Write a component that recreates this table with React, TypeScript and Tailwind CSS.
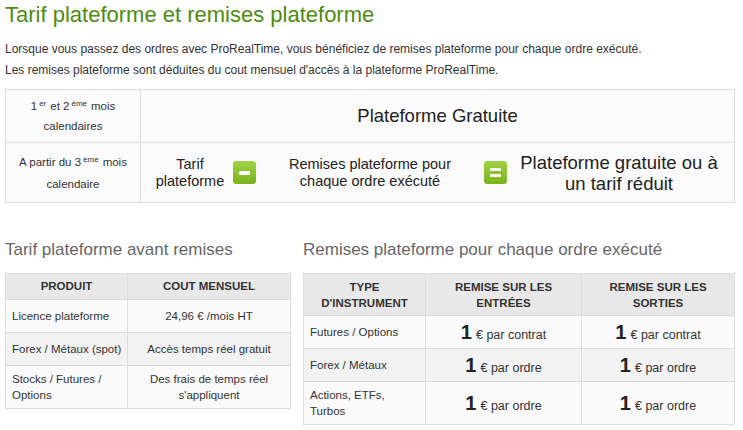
const font = { fontFamily: '"Liberation Sans", Arial, Helvetica, sans-serif' };

function GreenBox({ kind }: { kind: 'minus' | 'equal' }) {
  return (
    <div className="w-[23px] h-[23px] rounded-[3px] bg-gradient-to-b from-[#a2d245] to-[#79b21a] flex items-center justify-center shrink-0">
      {kind === 'minus' ? (
        <div className="w-[11px] h-[4px] bg-white rounded-[1px]" />
      ) : (
        <div className="flex flex-col gap-[3px]">
          <div className="w-[11px] h-[3px] bg-white rounded-[1px]" />
          <div className="w-[11px] h-[3px] bg-white rounded-[1px]" />
        </div>
      )}
    </div>
  );
}

const tarifs = [
  { produit: 'Licence plateforme', cout: '24,96 € /mois HT', h: 'h-[33px]', bg: 'bg-[#fafafa]' },
  { produit: 'Forex / Métaux (spot)', cout: 'Accès temps réel gratuit', h: 'h-[33px]', bg: 'bg-[#f2f2f2]' },
  { produit: 'Stocks / Futures / Options', cout: "Des frais de temps réel s'appliquent", h: 'h-[43px]', bg: 'bg-[#fafafa]' },
];

const remises = [
  { type: 'Futures / Options', unite: 'par contrat', h: 'h-[33px]', bg: 'bg-[#fafafa]' },
  { type: 'Forex / Métaux', unite: 'par ordre', h: 'h-[33px]', bg: 'bg-[#f2f2f2]' },
  { type: 'Actions, ETFs, Turbos', unite: 'par ordre', h: 'h-[43px]', bg: 'bg-[#fafafa]' },
];

function Montant({ unite }: { unite: string }) {
  return (
    <span>
      <span className="text-[20px] font-bold text-[#222] mr-[4px]">1</span>
      <span className="text-[12.5px]">€ {unite}</span>
    </span>
  );
}

export default function App() {
  return (
    <div className="w-[743px] h-[430px] bg-white text-[#333] overflow-hidden" style={font}>
      <div className="px-[5px]">
        <h1 className="text-[22px] leading-[24px] text-[#4e8b12] pt-[3px]">
          Tarif plateforme et remises plateforme
        </h1>

        <div className="mt-[12px] text-[12px] leading-[21px] text-[#333]">
          <p>Lorsque vous passez des ordres avec ProRealTime, vous bénéficiez de remises plateforme pour chaque ordre exécuté.</p>
          <p>Les remises plateforme sont déduites du cout mensuel d'accès à la plateforme ProRealTime.</p>
        </div>

        <table className="mt-[8px] w-[730px] border-collapse bg-[#fbfbfb]">
          <tbody>
            <tr className="h-[53px]">
              <td className="w-[135px] border border-[#dddddd] text-center text-[11.5px] leading-[20px]">
                1<sup className="text-[8px] ml-[2px] mr-[4px]">er</sup>et 2<sup className="text-[8px] ml-[2px] mr-[4px]">ème</sup>mois
                <br />
                calendaires
              </td>
              <td className="border border-[#dddddd] text-center text-[18.5px] text-[#222]">Plateforme Gratuite</td>
            </tr>
            <tr className="h-[60px]">
              <td className="border border-[#dddddd] text-center text-[11.5px] leading-[22px]">
                A partir du 3<sup className="text-[8px] ml-[2px] mr-[4px]">ème</sup>mois
                <br />
                calendaire
              </td>
              <td className="border border-[#dddddd]">
                <div className="flex items-center justify-center">
                  <div className="w-[72px] text-center text-[14.5px] leading-[17px] text-[#222]">Tarif plateforme</div>
                  <div className="ml-[7px]">
                    <GreenBox kind="minus" />
                  </div>
                  <div className="ml-[30px] w-[168px] text-center text-[14.5px] leading-[17px] text-[#222]">
                    Remises plateforme pour chaque ordre exécuté
                  </div>
                  <div className="ml-[30px]">
                    <GreenBox kind="equal" />
                  </div>
                  <div className="ml-[10px] w-[204px] text-center text-[18.5px] leading-[21px] text-[#222]">
                    Plateforme gratuite ou à un tarif réduit
                  </div>
                </div>
              </td>
            </tr>
          </tbody>
        </table>

        <div className="mt-[37px] flex items-start">
          <div className="w-[286px]">
            <h2 className="text-[17px] leading-[20px] text-[#666]">Tarif plateforme avant remises</h2>
            <table className="mt-[13px] w-[286px] border-collapse text-[11.5px] table-fixed">
              <thead>
                <tr className="h-[26px] bg-[#e8e8e8]">
                  <th className="w-[122px] border border-[#dddddd] font-bold text-[#333]">PRODUIT</th>
                  <th className="border border-[#dddddd] font-bold text-[#333]">COUT MENSUEL</th>
                </tr>
              </thead>
              <tbody>
                {tarifs.map((t) => (
                  <tr key={t.produit} className={`${t.h} ${t.bg}`}>
                    <td className="border border-[#dddddd] pl-[6px] pr-[1px] leading-[16px]">{t.produit}</td>
                    <td className="border border-[#dddddd] px-[6px] text-center leading-[16px]">{t.cout}</td>
                  </tr>
                ))}
              </tbody>
            </table>
          </div>

          <div className="ml-[12px] w-[432px]">
            <h2 className="text-[17px] leading-[20px] text-[#666]">Remises plateforme pour chaque ordre exécuté</h2>
            <table className="mt-[13px] w-[432px] border-collapse text-[11.5px] table-fixed">
              <thead>
                <tr className="h-[42px] bg-[#e8e8e8]">
                  <th className="w-[122px] border border-[#dddddd] font-bold text-[#333] leading-[16px]">TYPE<br />D'INSTRUMENT</th>
                  <th className="w-[156px] border border-[#dddddd] font-bold text-[#333] leading-[16px]">REMISE SUR LES<br />ENTRÉES</th>
                  <th className="border border-[#dddddd] font-bold text-[#333] leading-[16px]">REMISE SUR LES<br />SORTIES</th>
                </tr>
              </thead>
              <tbody>
                {remises.map((r) => (
                  <tr key={r.type} className={`${r.h} ${r.bg}`}>
                    <td className="border border-[#dddddd] pl-[6px] pr-[14px] leading-[16px]">{r.type}</td>
                    <td className="border border-[#dddddd] text-center"><Montant unite={r.unite} /></td>
                    <td className="border border-[#dddddd] text-center"><Montant unite={r.unite} /></td>
                  </tr>
                ))}
              </tbody>
            </table>
          </div>
        </div>
      </div>
    </div>
  );
}
